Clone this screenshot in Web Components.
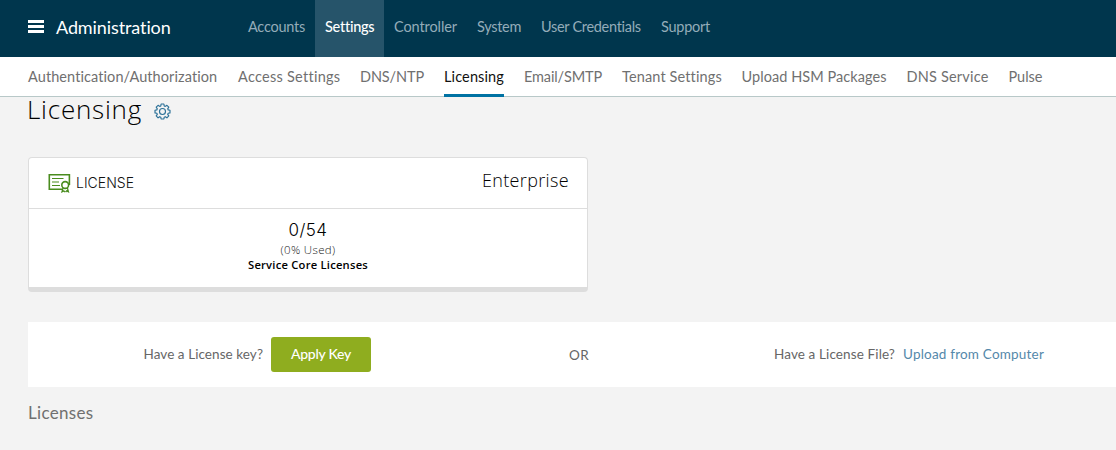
<!DOCTYPE html>
<html lang="en"><head><meta charset="utf-8"><title>Administration</title>
<style>
html,body{margin:0;height:100%;overflow:hidden}
body{background:#f3f3f3;font-family:Lato,"Open Sans",sans-serif;color:#555}
</style></head><body>
<license-page></license-page>
<script>
const define=(name,html,init)=>customElements.define(name,class extends HTMLElement{
  connectedCallback(){
    if(this.shadowRoot)return;
    const t=document.createElement('template');t.innerHTML=html;
    this.attachShadow({mode:'open'}).append(t.content.cloneNode(true));
    if(init)init(this);
  }
});
/* A single line of text, tracked so that it fills the width in "fit". */
define('fit-text',`<style>:host{display:block;white-space:nowrap;flex:none}span{display:inline-block}</style><span><slot></slot></span>`,el=>{
  const w=+el.getAttribute('fit'),s=el.shadowRoot.querySelector('span');
  el.style.width=w+'px';
  const n=el.textContent.length,natural=s.getBoundingClientRect().width;
  if(natural&&n)s.style.letterSpacing=((w-natural)/n)+'px';
});
define('main-tab',`<style>
:host{display:flex;padding:0 10px;height:57px;font-size:14.5px;line-height:54px;color:#94acb9}
:host([active]){background:#26546a;color:#fff;font-weight:500}
</style><slot></slot>`);
define('sub-tab',`<style>
:host{display:flex;box-sizing:border-box;height:40px;font-size:14.5px;line-height:40px;color:#707070}
:host([active]){color:#111;border-bottom:3px solid #0072a3}
</style><slot></slot>`);
define('top-bar',`<style>
:host{display:flex;height:57px;background:#00364d;color:#fff;padding-left:28px}
svg{margin:20px 12px 0 0;flex:none}
.name{font-size:18px;line-height:54px;margin-right:67px}
nav{display:flex}
</style>
<svg width="16" height="13" shape-rendering="crispEdges"><path d="M0 0h16v3H0zM0 5h16v3H0zM0 10h16v3H0z" fill="#fff"/></svg>
<fit-text class="name" fit="115">Administration</fit-text>
<nav>
<main-tab><fit-text fit="57">Accounts</fit-text></main-tab>
<main-tab active><fit-text fit="49">Settings</fit-text></main-tab>
<main-tab><fit-text fit="63">Controller</fit-text></main-tab>
<main-tab><fit-text fit="44">System</fit-text></main-tab>
<main-tab><fit-text fit="100">User Credentials</fit-text></main-tab>
<main-tab><fit-text fit="49">Support</fit-text></main-tab>
</nav>`);
define('sub-bar',`<style>
:host{display:flex;gap:20px;height:39px;background:#fff;border-bottom:1px solid #b8c8c8;padding-left:28px}
</style>
<sub-tab><fit-text fit="190">Authentication/Authorization</fit-text></sub-tab>
<sub-tab><fit-text fit="102">Access Settings</fit-text></sub-tab>
<sub-tab><fit-text fit="64">DNS/NTP</fit-text></sub-tab>
<sub-tab active><fit-text fit="60">Licensing</fit-text></sub-tab>
<sub-tab><fit-text fit="78">Email/SMTP</fit-text></sub-tab>
<sub-tab><fit-text fit="99.500">Tenant Settings</fit-text></sub-tab>
<sub-tab><fit-text fit="145">Upload HSM Packages</fit-text></sub-tab>
<sub-tab><fit-text fit="82">DNS Service</fit-text></sub-tab>
<sub-tab><fit-text fit="34">Pulse</fit-text></sub-tab>`);
define('page-title',`<style>
:host{display:flex;height:60px;padding-left:27px;color:#000}
fit-text{font-family:"Open Sans",sans-serif;font-size:26px;font-weight:300;line-height:25px}
svg{margin:6px 0 0 12px}
</style><fit-text fit="115">Licensing</fit-text>
<svg width="17" height="17" viewBox="0 0 17 17" fill="none" stroke="#2c7198" stroke-width="1.15" stroke-linejoin="round"><path d="M7.1 1h2.8l.3 1.9 1.1.5 1.6-1.1 1.9 1.9-1.1 1.6.5 1.1 1.8.3v2.7l-1.8.3-.5 1.1 1.1 1.6-1.9 1.9-1.6-1.1-1.1.5L9.900 16H7.100l-.3-1.800-1.100-.5-1.600 1.100-1.900-1.900 1.100-1.600-.5-1.100L1 9.900V7.200l1.800-.3.5-1.100-1.100-1.600 1.900-1.900 1.600 1.100 1.100-.5z"/><circle cx="8.500" cy="8.500" r="3"/></svg>`);
define('license-card',`<style>
:host{display:block;box-sizing:border-box;width:560px;height:135px;margin-left:28px;background:#fff;border:1px solid #ddd;border-bottom-width:5px;border-radius:4px;font-family:"Open Sans",Inter,sans-serif;font-weight:300;color:#000}
header{display:flex;align-items:flex-start;height:50px;border-bottom:1px solid #ddd;padding:0 18px 0 19px}
svg{margin:15px 5px 0 0}
.kind{font-family:Inter,sans-serif;font-size:14px;line-height:49px;margin-right:auto;color:#111}
.tier{font-size:18px;line-height:45px}
section{display:flex;flex-direction:column;align-items:center;padding-top:10px}
.n{font-family:Inter,sans-serif;font-size:17px;line-height:23px;margin-bottom:-2px}
.u{font-size:11.500px;line-height:19px;color:#222}
.t{font-size:11.200px;line-height:12px;font-weight:600;color:#000}
</style>
<header>
<svg width="23" height="21" viewBox="0 0 23 21" fill="none" stroke="#4a8c1f" stroke-width="1.400"><path d="M14 16.300H1.300V1.700h20.100V10M21.400 10v2" stroke-width="1.600"/><path d="M4 5.500h11.500M4 9h7M4 12.500h8" stroke-width="1.200"/><circle cx="17.200" cy="12" r="3.400" fill="#fff" stroke-width="1.600"/><path d="M15 14.800 14 18.800l1.800-.9 1 1.200M19.400 14.800l1 4-1.800-.9-1 1.200" stroke-width="1.300"/></svg>
<fit-text class="kind" fit="58">LICENSE</fit-text><fit-text class="tier" fit="87">Enterprise</fit-text></header>
<section><fit-text class="n" fit="39">0/54</fit-text><fit-text class="u" fit="55">(0% Used)</fit-text><fit-text class="t" fit="120">Service Core Licenses</fit-text></section>`);
define('apply-button',`<style>
:host{display:flex;justify-content:center;width:100px;height:35px;border-radius:3px;background:#8fad1f;color:#fff;font-size:14px;font-weight:500;line-height:34px;margin:0 198px 0 8px}
</style><slot></slot>`);
define('license-actions',`<style>
:host{display:flex;align-items:center;height:65px;margin:30px 0 0 28px;padding-left:115.500px;background:#fff;font-size:13.500px;color:#666}
.q{padding-bottom:2px}
.or{margin-right:185px}
.link{color:#5488aa;margin-left:8px}
</style>
<fit-text class="q" fit="119.500">Have a License key?</fit-text>
<apply-button><fit-text fit="60">Apply Key</fit-text></apply-button>
<fit-text class="or" fit="20">OR</fit-text>
<fit-text class="q" fit="121">Have a License File?</fit-text>
<fit-text class="q link" fit="141">Upload from Computer</fit-text>`);
define('license-page',`<style>:host{display:block}h2{margin:15px 0 0 28px;font-size:17px;line-height:22px;font-weight:400;color:#707070}</style>
<top-bar></top-bar><sub-bar></sub-bar><page-title></page-title><license-card></license-card><license-actions></license-actions>
<h2><fit-text fit="65.500">Licenses</fit-text></h2>`);
</script></body></html>
